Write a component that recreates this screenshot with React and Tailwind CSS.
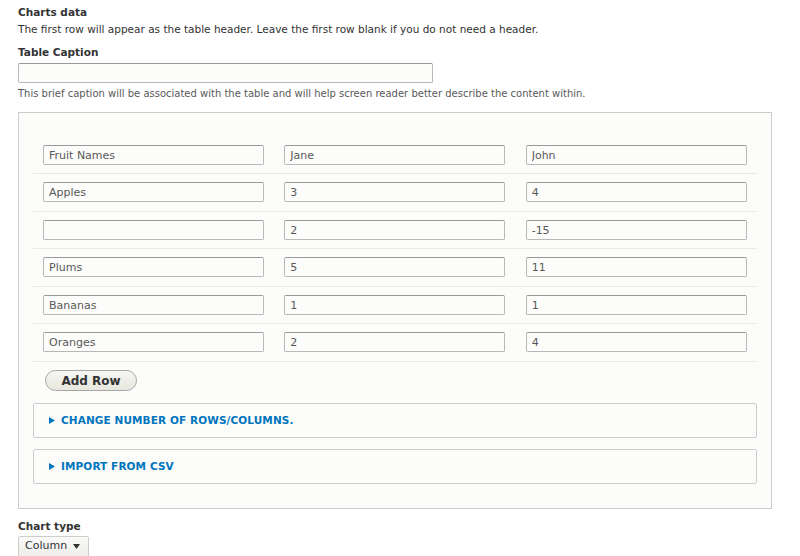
import React from 'react';

const rows = [
  ['Fruit Names', 'Jane', 'John'],
  ['Apples', '3', '4'],
  ['', '2', '-15'],
  ['Plums', '5', '11'],
  ['Bananas', '1', '1'],
  ['Oranges', '2', '4'],
];

const font = { fontFamily: '"DejaVu Sans", sans-serif' };

function Cell({ value, tall }) {
  return (
    <td className={tall ? 'px-[10px] pt-[8px] pb-[9px]' : 'px-[10px] pt-[8px] pb-[8px]'}>
      <input
        defaultValue={value}
        className="block w-[221px] h-[20px] px-[5px] border border-[#b8b8b8] border-t-[#999] rounded-[2px] bg-[#fcfcfa] text-[11px] text-[#595959] outline-none"
      />
    </td>
  );
}

function Details({ title, first }) {
  return (
    <div className={`h-[35px] border border-[#ccc] rounded-[2px] bg-[#fcfcfa] flex items-center px-[15px] ${first ? 'mt-[12px]' : 'mt-[11px]'}`}>
      <svg width="6" height="7" viewBox="0 0 6 7" className="mr-[6px]">
        <path d="M0 0 L6 3.5 L0 7 Z" fill="#0074bd" />
      </svg>
      <span className="text-[#0074bd] text-[10.5px] font-bold uppercase tracking-[0.1px]">{title}</span>
    </div>
  );
}

export default function App() {
  return (
    <div className="bg-white w-[800px] h-[556px] overflow-hidden text-[#333] px-[18px] pt-[5px]" style={font}>
      <div className="text-[10.5px] font-bold leading-[14px]">Charts data</div>
      <div className="text-[10.5px] leading-[14px] mt-[3px] text-[#333]">
        The first row will appear as the table header. Leave the first row blank if you do not need a header.
      </div>

      <div className="text-[10.5px] font-bold leading-[14px] mt-[9px]">Table Caption</div>
      <input className="block w-[415px] h-[20px] mt-[4px] border border-[#b8b8b8] border-t-[#999] rounded-[2px] bg-[#fcfcfa] outline-none" />
      <div className="text-[10px] leading-[13px] mt-[4px] text-[#595959]">
        This brief caption will be associated with the table and will help screen reader better describe the content within.
      </div>

      <div className="mt-[12px] w-[754px] h-[397px] border border-[#ccc] bg-[#fcfcfa] px-[14px] pt-[24px]">
        <table className="w-[724px] border-collapse">
          <tbody>
            {rows.map((r, i) => (
              <tr key={i} className="border-b border-[#e8e8e5]">
                {r.map((v, j) => (
                  <Cell key={j} value={v} tall={i % 2 === 1} />
                ))}
              </tr>
            ))}
          </tbody>
        </table>

        <button className="block ml-[12px] mt-[8px] w-[92px] h-[21px] rounded-full border border-[#a6a6a6] bg-gradient-to-b from-[#f6f6f3] to-[#e7e7df] text-[12px] font-bold text-[#333]">
          Add Row
        </button>

        <Details title="Change number of rows/columns." first />
        <Details title="Import from CSV" />
      </div>

      <div className="text-[10.5px] font-bold leading-[14px] mt-[10px]">Chart type</div>
      <div className="mt-[3px] w-[71px] h-[21px] border border-[#ccc] rounded-[2px] bg-gradient-to-b from-[#fafaf8] to-[#ededea] flex items-center justify-between pl-[6px] pr-[8px] text-[11px] text-[#333]">
        <span>Column</span>
        <svg width="7" height="5" viewBox="0 0 7 5">
          <path d="M0 0 L7 0 L3.5 5 Z" fill="#333" />
        </svg>
      </div>
    </div>
  );
}
